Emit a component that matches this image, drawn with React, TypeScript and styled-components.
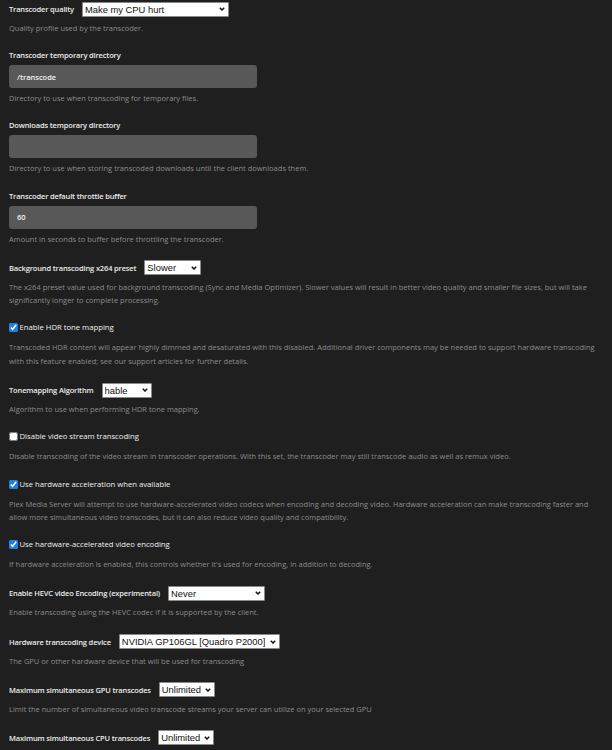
import React, { FC } from 'react';
import styled, { createGlobalStyle } from 'styled-components';

const GlobalStyle = createGlobalStyle`
  body {
    margin: 0;
    background: #1f1f1f;
    font-family: 'Open Sans', 'Noto Sans', sans-serif;
  }
`;

const Page = styled.div`
  display: flex;
  flex-direction: column;
  padding: 1px 9px 0;
  width: 612px;
  box-sizing: border-box;
  overflow: hidden;
`;

const Setting = styled.div`
  display: flex;
  flex-direction: column;
  margin-bottom: 13.7px;
`;

const Row = styled.div`
  display: flex;
  align-items: center;
  gap: 8px;
  height: 16px;
`;

const Label = styled.label`
  display: block;
  color: #ececec;
  font-size: 7.5px;
  font-weight: 600;
  letter-spacing: -0.15px;
  line-height: 12px;
`;

const CheckLabel = styled.label`
  display: flex;
  align-items: center;
  gap: 1.5px;
  height: 13px;
  color: #f0f0f0;
  font-size: 7.7px;
  line-height: 13px;
`;

const Check = styled.input.attrs({ type: 'checkbox' })`
  margin: 0;
  width: 9px;
  height: 9px;
  accent-color: #1a7fe6;
`;

// gap above the description differs between selects, checkboxes and text fields
const Help = styled.p<{ $gap: number }>`
  margin: ${p => p.$gap}px 0 0;
  color: #8c8c8c;
  font-size: 7.5px;
  line-height: 13.5px;
`;

const TextBox = styled.input`
  margin-top: 4px;
  width: 248px;
  height: 23px;
  box-sizing: border-box;
  border: 0;
  border-radius: 3px;
  background: #585858;
  color: #f2f2f2;
  font-family: inherit;
  font-size: 7.5px;
  font-weight: 600;
  padding: 0 8px;
  outline: none;
`;

const SelectWrap = styled.div<{ $w: number }>`
  position: relative;
  width: ${p => p.$w}px;
  height: 15px;
`;

const Select = styled.select`
  display: block;
  appearance: none;
  width: 100%;
  height: 100%;
  box-sizing: border-box;
  margin: 0;
  padding: 0 9px 0 2px;
  border: 1px solid #8a8a8a;
  border-radius: 1px;
  background: #fff;
  color: #111;
  font-family: 'Liberation Sans', Arial, sans-serif;
  font-size: 9.4px;
  line-height: 13px;
`;

const Chevron = styled.svg`
  position: absolute;
  right: 4px;
  top: 5.5px;
  width: 6px;
  height: 4px;
  pointer-events: none;
`;

const Dropdown: FC<{ w: number; value: string }> = ({ w, value }) => (
  <SelectWrap $w={w}>
    <Select defaultValue={value}>
      <option>{value}</option>
    </Select>
    <Chevron viewBox="0 0 6 4">
      <path d="M0.8 0.8l2.2 2.2L5.2 0.8" fill="none" stroke="#111" strokeWidth="1.5" />
    </Chevron>
  </SelectWrap>
);

const App: FC = () => (
  <Page>
    <GlobalStyle />

    <Setting>
      <Row>
        <Label>Transcoder quality</Label>
        <Dropdown w={147} value="Make my CPU hurt" />
      </Row>
      <Help $gap={5}>Quality profile used by the transcoder.</Help>
    </Setting>

    <Setting>
      <Label>Transcoder temporary directory</Label>
      <TextBox defaultValue="/transcode" />
      <Help $gap={4}>Directory to use when transcoding for temporary files.</Help>
    </Setting>

    <Setting>
      <Label>Downloads temporary directory</Label>
      <TextBox defaultValue="" />
      <Help $gap={4}>Directory to use when storing transcoded downloads until the client downloads them.</Help>
    </Setting>

    <Setting>
      <Label>Transcoder default throttle buffer</Label>
      <TextBox defaultValue="60" />
      <Help $gap={4}>Amount in seconds to buffer before throttling the transcoder.</Help>
    </Setting>

    <Setting>
      <Row>
        <Label>Background transcoding x264 preset</Label>
        <Dropdown w={57} value="Slower" />
      </Row>
      <Help $gap={5}>
        The x264 preset value used for background transcoding (Sync and Media Optimizer). Slower values will result in
        better video quality and smaller file sizes, but will take significantly longer to complete processing.
      </Help>
    </Setting>

    <Setting>
      <CheckLabel>
        <Check defaultChecked />
        Enable HDR tone mapping
      </CheckLabel>
      <Help $gap={7}>
        Transcoded HDR content will appear highly dimmed and desaturated with this disabled. Additional driver
        components may be needed to support hardware transcoding with this feature enabled; see our support articles
        for further details.
      </Help>
    </Setting>

    <Setting>
      <Row>
        <Label>Tonemapping Algorithm</Label>
        <Dropdown w={50} value="hable" />
      </Row>
      <Help $gap={5}>Algorithm to use when performing HDR tone mapping.</Help>
    </Setting>

    <Setting>
      <CheckLabel>
        <Check />
        Disable video stream transcoding
      </CheckLabel>
      <Help $gap={7}>
        Disable transcoding of the video stream in transcoder operations. With this set, the transcoder may still
        transcode audio as well as remux video.
      </Help>
    </Setting>

    <Setting>
      <CheckLabel>
        <Check defaultChecked />
        Use hardware acceleration when available
      </CheckLabel>
      <Help $gap={7}>
        Plex Media Server will attempt to use hardware-accelerated video codecs when encoding and decoding video.
        Hardware acceleration can make transcoding faster and allow more simultaneous video transcodes, but it can also
        reduce video quality and compatibility.
      </Help>
    </Setting>

    <Setting>
      <CheckLabel>
        <Check defaultChecked />
        Use hardware-accelerated video encoding
      </CheckLabel>
      <Help $gap={7}>
        If hardware acceleration is enabled, this controls whether it's used for encoding, in addition to decoding.
      </Help>
    </Setting>

    <Setting>
      <Row>
        <Label>Enable HEVC video Encoding (experimental)</Label>
        <Dropdown w={97} value="Never" />
      </Row>
      <Help $gap={5}>Enable transcoding using the HEVC codec if it is supported by the client.</Help>
    </Setting>

    <Setting>
      <Row>
        <Label>Hardware transcoding device</Label>
        <Dropdown w={161} value="NVIDIA GP106GL [Quadro P2000]" />
      </Row>
      <Help $gap={5}>The GPU or other hardware device that will be used for transcoding</Help>
    </Setting>

    <Setting>
      <Row>
        <Label>Maximum simultaneous GPU transcodes</Label>
        <Dropdown w={56} value="Unlimited" />
      </Row>
      <Help $gap={5}>Limit the number of simultaneous video transcode streams your server can utilize on your selected GPU</Help>
    </Setting>

    <Setting>
      <Row>
        <Label>Maximum simultaneous CPU transcodes</Label>
        <Dropdown w={56} value="Unlimited" />
      </Row>
    </Setting>
  </Page>
);

export default App;
